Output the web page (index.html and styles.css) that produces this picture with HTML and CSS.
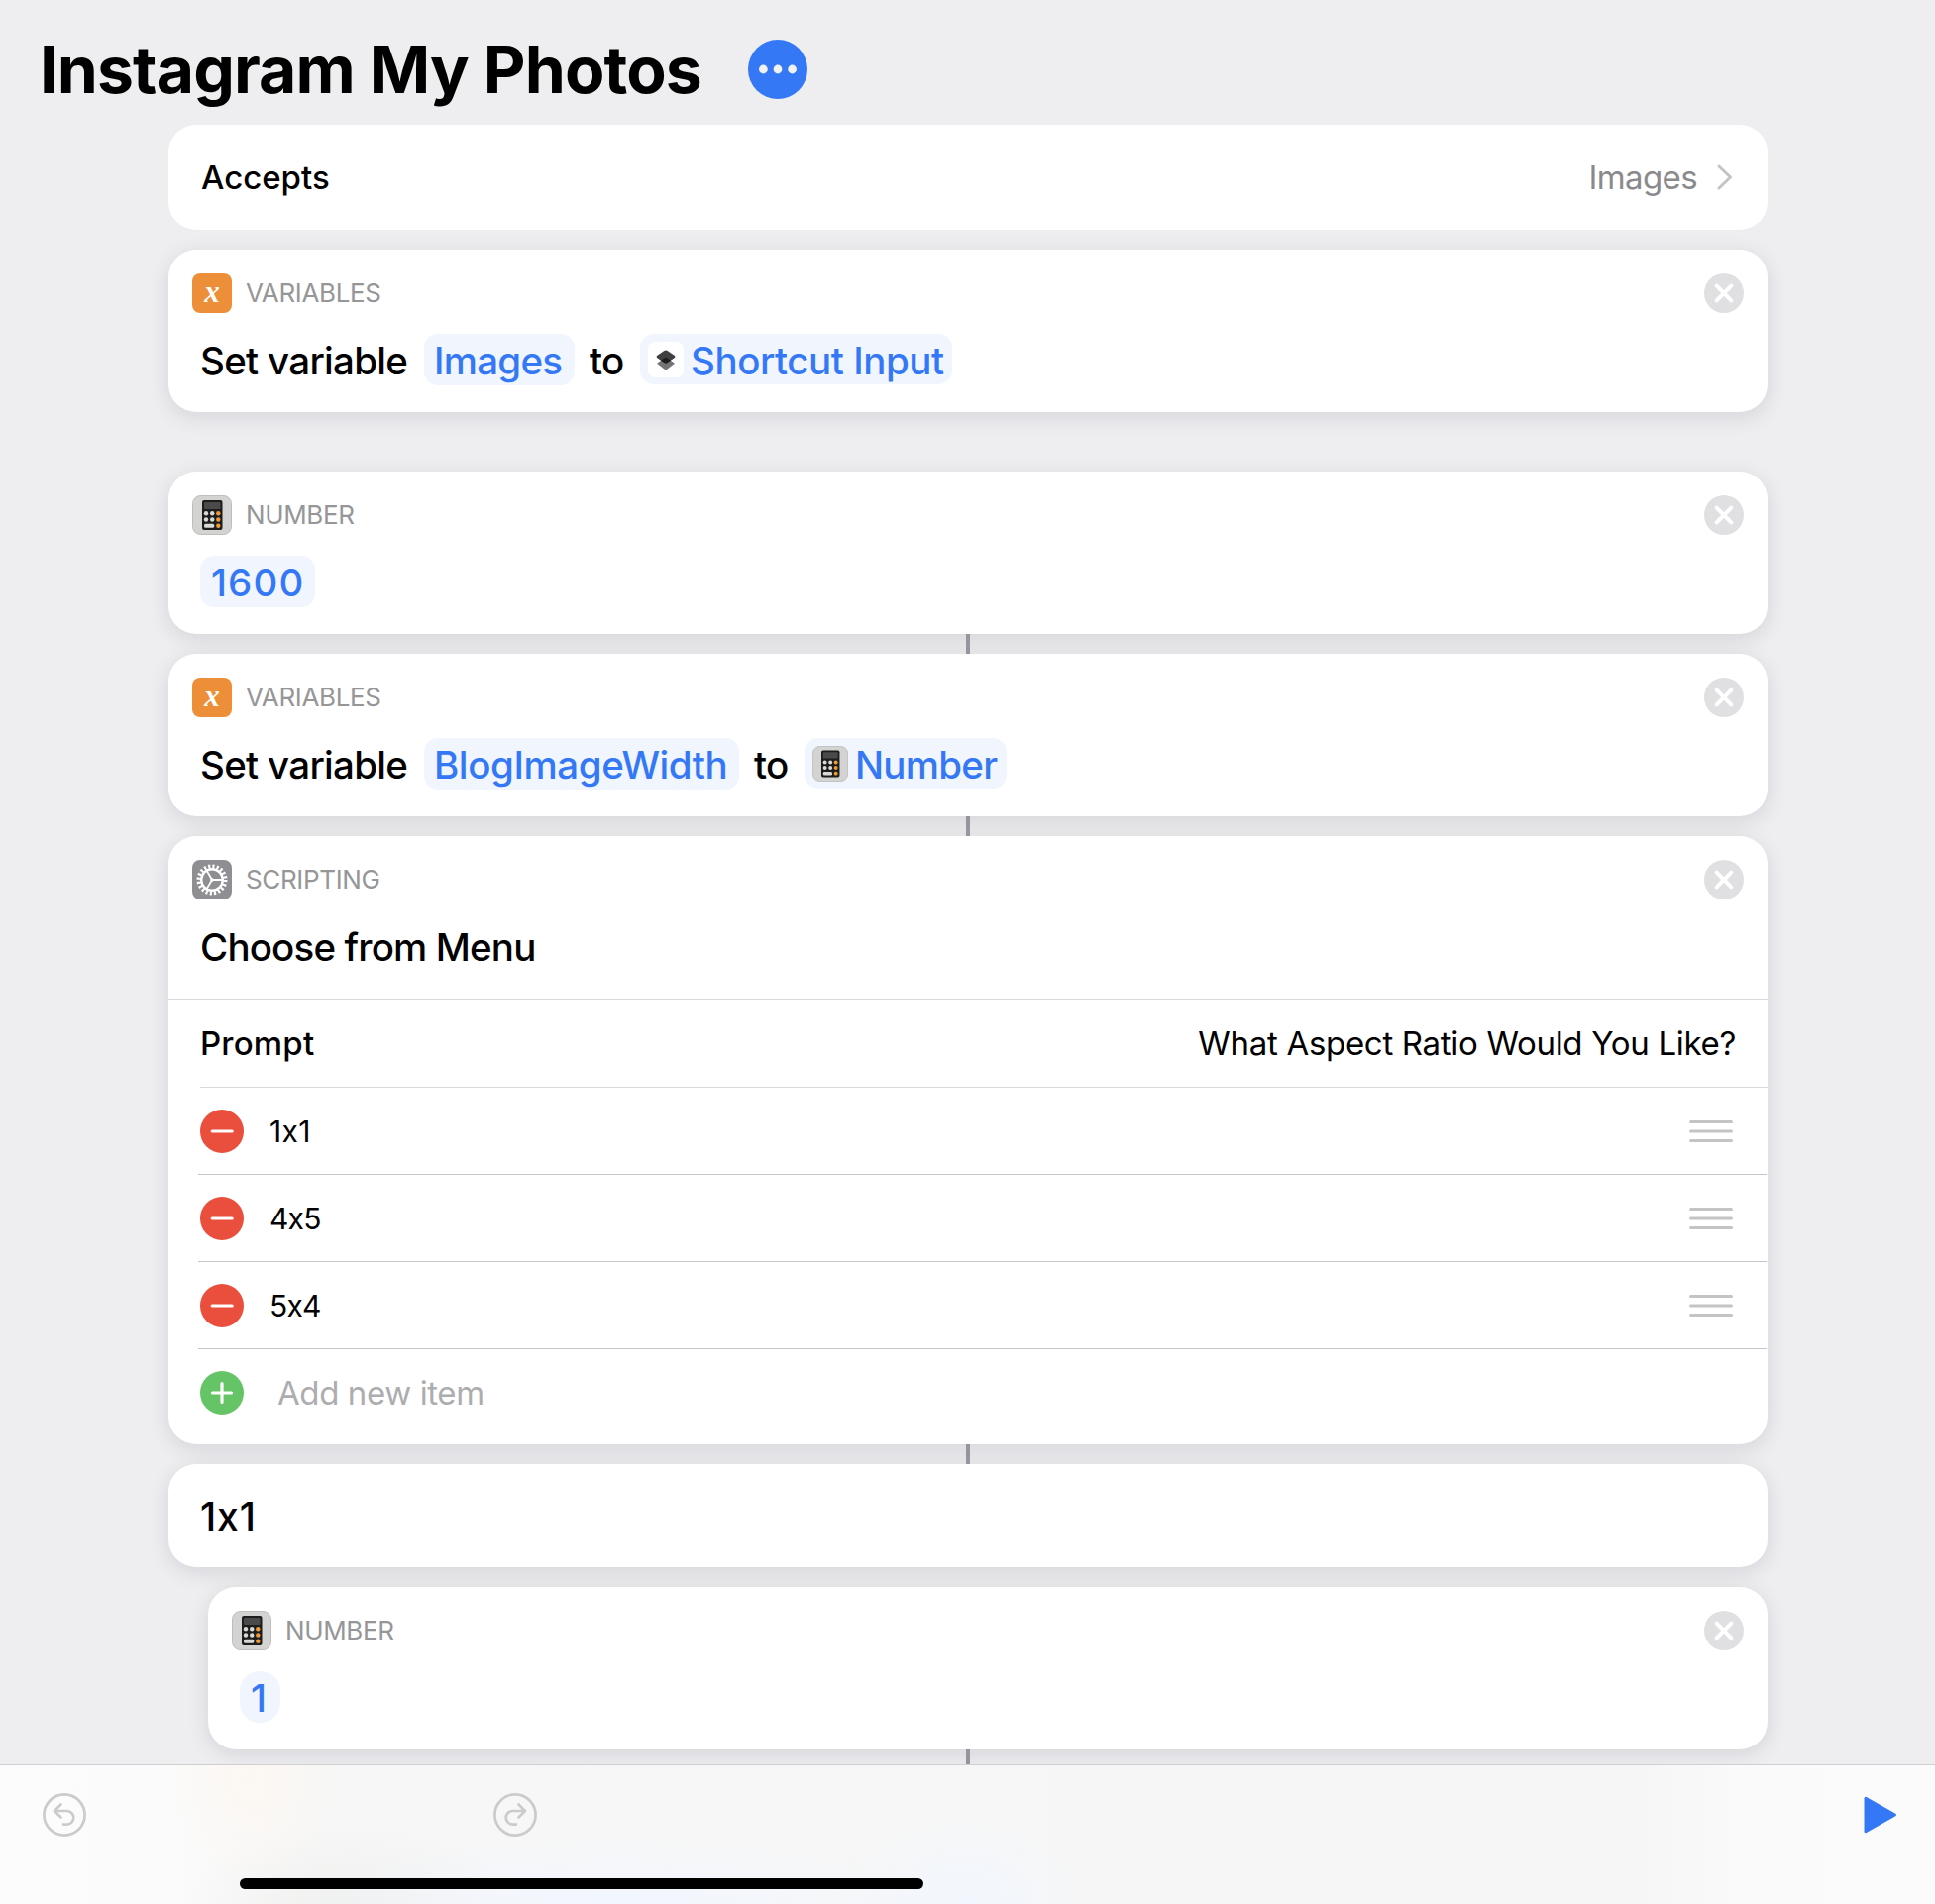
FILE: index.html
```html
<!DOCTYPE html>
<html lang="en">
<head>
<meta charset="utf-8">
<title>Instagram My Photos</title>
<link rel="stylesheet" href="styles.css">
</head>
<body>
<svg class="defs" aria-hidden="true">
  <symbol id="calc" viewBox="0 0 40 40">
    <rect x=".5" y=".5" width="39" height="39" rx="8" fill="#d3d3d1" stroke="#bdbdbb"/>
    <rect x="10" y="5" width="20.500" height="30" rx="2" fill="#1d1d1d"/>
    <rect x="12" y="7" width="16.500" height="7" rx="1" fill="#4a4a4a"/>
    <g fill="#d9d9d7"><circle cx="14" cy="18.300" r="2.200"/><circle cx="20.200" cy="18.300" r="2.200"/><circle cx="14" cy="24.500" r="2.200"/><circle cx="20.200" cy="24.500" r="2.200"/><rect x="12" y="28.800" width="10.200" height="4" rx="1.500"/></g>
    <g fill="#f09a37"><circle cx="26.300" cy="18.300" r="2.200"/><circle cx="26.300" cy="24.500" r="2.200"/><circle cx="26.300" cy="30.700" r="2.200"/></g>
  </symbol>
  <symbol id="close" viewBox="0 0 40 40"><circle cx="20" cy="20" r="20" fill="#e0e0e2"/><path d="M12.700 12.700l14.600 14.600M27.300 12.700l-14.600 14.600" stroke="#fff" stroke-width="4" stroke-linecap="round"/></symbol>
  <symbol id="minus" viewBox="0 0 44 44"><circle cx="22" cy="22" r="22" fill="#ea4e3d"/><path d="M12.200 22h20" stroke="#fff" stroke-width="3.200" stroke-linecap="round"/></symbol>
  <symbol id="grip" viewBox="0 0 44 24"><path d="M1.500 2.500h41M1.500 12h41M1.500 21.500h41" stroke="#c4c4c4" stroke-width="3" stroke-linecap="round"/></symbol>
</svg>
<main class="editor">
  <header class="title-bar">
    <h1>Instagram My Photos</h1>
    <svg class="more" viewBox="0 0 60 60"><circle cx="30" cy="30" r="30" fill="#3478f6"/><g fill="#f2f2f4"><circle cx="15.400" cy="30" r="4.400"/><circle cx="30" cy="30" r="4.400"/><circle cx="44.600" cy="30" r="4.400"/></g></svg>
  </header>
  <section class="flow">
    <div class="card accepts">
      <span>Accepts</span>
      <span class="value">Images</span>
      <svg class="chevron" viewBox="0 0 16 26"><path d="M2 2l11.500 11L2 24" fill="none" stroke="#c4c4c6" stroke-width="3" stroke-linecap="round" stroke-linejoin="round"/></svg>
    </div>

    <article class="card action loose">
      <div class="head"><span class="icon var">x</span><span class="kind">VARIABLES</span><svg class="close"><use href="#close"/></svg></div>
      <div class="sentence"><span class="t-set">Set variable</span><span class="pill p-images">Images</span><span class="t-to">to</span><span class="pill magic p-input"><svg class="glyph" viewBox="0 0 36 36"><rect width="36" height="36" rx="7" fill="#fff"/><path d="M18 15.500l9 6.200-7.400 5.900q-1.600 1-3.200 0L9 21.700z" fill="#747474"/><path d="M16.400 8.900q1.600-1 3.200 0l7.400 5.200q.8.900 0 1.800l-7.400 5.200q-1.600 1-3.200 0L9 15.900q-.8-.9 0-1.800z" fill="#404040"/><path d="M18 15.500l5 3.200-3.400 2.400q-1.600 1-3.200 0L13 18.700z" fill="#1e1e1e"/></svg><span>Shortcut Input</span></span></div>
    </article>

    <article class="card action">
      <div class="head"><svg class="icon"><use href="#calc"/></svg><span class="kind">NUMBER</span><svg class="close"><use href="#close"/></svg></div>
      <div class="sentence"><span class="pill p-1600">1600</span></div>
    </article>
    <i class="link"></i>

    <article class="card action">
      <div class="head"><span class="icon var">x</span><span class="kind">VARIABLES</span><svg class="close"><use href="#close"/></svg></div>
      <div class="sentence"><span class="t-set">Set variable</span><span class="pill p-blog">BlogImageWidth</span><span class="t-to">to</span><span class="pill magic p-number"><svg class="glyph"><use href="#calc"/></svg><span>Number</span></span></div>
    </article>
    <i class="link"></i>

    <article class="card menu">
      <div class="head"><svg class="icon" viewBox="0 0 40 40"><rect width="40" height="40" rx="8" fill="#8e8e93"/><g fill="none" stroke="#fff"><circle cx="20" cy="20" r="13.500" stroke-width="4" stroke-dasharray="2.120 2.121"/><circle cx="20" cy="20" r="10.800" stroke-width="2.400"/><path d="M20 20h10.500M20 20l-5.300-9.100M20 20l-5.300 9.100" stroke-width="1.800"/></g><circle cx="20" cy="20" r="1.800" fill="#fff"/></svg><span class="kind">SCRIPTING</span><svg class="close"><use href="#close"/></svg></div>
      <div class="sentence"><span class="t-choose">Choose from Menu</span></div>
      <div class="prompt"><span class="t-prompt">Prompt</span><span class="question">What Aspect Ratio Would You Like?</span></div>
      <div class="item first"><svg class="dot"><use href="#minus"/></svg><span>1x1</span><svg class="grip"><use href="#grip"/></svg></div>
      <div class="item tight"><svg class="dot"><use href="#minus"/></svg><span>4x5</span><svg class="grip"><use href="#grip"/></svg></div>
      <div class="item tight"><svg class="dot"><use href="#minus"/></svg><span>5x4</span><svg class="grip"><use href="#grip"/></svg></div>
      <div class="item add"><svg class="dot" viewBox="0 0 44 44"><circle cx="22" cy="22" r="22" fill="#65c466"/><path d="M12.500 22h19M22 12.500v19" stroke="#fff" stroke-width="3.200" stroke-linecap="round"/></svg><span>Add new item</span></div>
    </article>
    <i class="link"></i>

    <div class="card case">1x1</div>

    <article class="card action nested">
      <div class="head"><svg class="icon"><use href="#calc"/></svg><span class="kind">NUMBER</span><svg class="close"><use href="#close"/></svg></div>
      <div class="sentence"><span class="pill p-one">1</span></div>
    </article>
    <i class="link nested-link"></i>
  </section>
</main>
<footer class="toolbar">
  <div class="tools">
    <svg class="undo" viewBox="0 0 44 44" fill="none" stroke="#cbcbcb" stroke-width="2.700" stroke-linecap="round" stroke-linejoin="round"><circle cx="22" cy="22" r="20.600"/><path d="M18.500 11.500L12 18l6.500 6.500M12 18h12.500a6.800 6.800 0 0 1 0 13.600H21"/></svg>
    <svg class="redo" viewBox="0 0 44 44" fill="none" stroke="#cbcbcb" stroke-width="2.700" stroke-linecap="round" stroke-linejoin="round"><circle cx="22" cy="22" r="20.600"/><path d="M25.500 11.500L32 18l-6.500 6.500M32 18H19.500a6.800 6.800 0 0 0 0 13.600H23"/></svg>
    <svg class="play" viewBox="0 0 34 38"><path d="M2 2.200L31.500 19 2 35.800z" fill="#3478f6" stroke="#3478f6" stroke-width="3" stroke-linejoin="round"/></svg>
  </div>
  <div class="home"></div>
</footer>
</body>
</html>
```
FILE: styles.css
```css
* { box-sizing: border-box; }
body {
  margin: 0;
  width: 1953px;
  height: 1922px;
  overflow: hidden;
  display: flex;
  flex-direction: column;
  background: #eeeef1;
  color: #000;
  font-family: Inter, "Liberation Sans", sans-serif;
  font-feature-settings: "calt" 0;
  white-space: nowrap;
}
svg { display: block; flex: none; }
.defs { position: absolute; width: 0; height: 0; }
.editor { height: 1781px; overflow: hidden; flex: none; }

.title-bar { display: flex; align-items: center; height: 126px; padding: 14px 0 0 40px; }
h1 { margin: 0; width: 715px; font-size: 66px; font-weight: 700; line-height: 80px; letter-spacing: -.85px; }
.more { width: 60px; height: 60px; }

.flow { display: flex; flex-direction: column; margin: 0 169px 0 170px; }
.card { flex: none; background: #fff; border-radius: 28px; box-shadow: 0 5px 22px rgba(0, 0, 25, .11); }
.accepts {
  display: flex;
  align-items: center;
  height: 106px;
  margin-bottom: 20px;
  padding: 0 35px 0 33px;
  font-size: 33px;
  font-weight: 500;
  box-shadow: none;
}
.accepts .value { margin-left: auto; font-weight: 400; letter-spacing: -.6px; color: #8a8a8c; }
.chevron { width: 16px; height: 26px; margin-left: 20px; }

.action { height: 164px; }
.loose { margin-bottom: 60px; }
.nested { margin-left: 40px; }
.link { flex: none; align-self: center; width: 4px; height: 20px; background: #93969c; position: relative; }

.head { display: flex; align-items: center; height: 64px; padding: 24px 24px 0; }
.icon { width: 40px; height: 40px; }
.var {
  border-radius: 8px;
  background: #ec8f38;
  color: #fff;
  font: italic 700 31px/38px "Liberation Serif", serif;
  text-align: center;
}
.kind { margin-left: 14px; font-size: 26px; line-height: 40px; letter-spacing: -.35px; color: #969698; }
.close { width: 40px; height: 40px; margin-left: auto; }

.sentence {
  display: flex;
  align-items: center;
  height: 52px;
  margin-top: 21px;
  padding-left: 32px;
  font-size: 38.5px;
  font-weight: 500;
  line-height: 50px;
}
.sentence span:not(.pill), .pill:not(.magic) { padding-top: 2px; }
.pill { display: flex; align-items: center; height: 52px; border-radius: 14px; background: #f0f5fe; color: #3478f6; padding-left: 10px; }
.magic { height: 51px; padding-left: 8px; margin-bottom: 1px; }
.glyph { width: 36px; height: 36px; margin-right: 7px; }
.t-set { width: 226px; letter-spacing: -.7px; }
.t-to { width: 66px; padding-left: 15px; letter-spacing: -.7px; }
.t-choose { letter-spacing: -.85px; }
.p-images { width: 152px; letter-spacing: -.75px; }
.p-input { width: 315px; letter-spacing: -.45px; }
.p-1600 { width: 116px; padding-left: 11px; letter-spacing: 1.1px; }
.p-blog { width: 318px; letter-spacing: -.42px; }
.p-number { width: 204px; letter-spacing: -.75px; }
.p-one { width: 41px; padding-left: 11px; border-radius: 20px; }

.menu { height: 614px; }
.prompt {
  display: flex;
  align-items: center;
  justify-content: space-between;
  height: 89px;
  margin-top: 27px;
  padding: 0 32px;
  border-top: 1px solid #d9d9db;
  font-size: 33px;
  font-weight: 500;
}
.t-prompt { letter-spacing: .2px; }
.question { font-weight: 400; letter-spacing: -.31px; }
.item {
  display: flex;
  align-items: center;
  height: 88px;
  margin: 0 1px 0 30px;
  padding: 0 34px 0 2px;
  border-top: 1px solid #c6c6c8;
  font-size: 30px;
}
.item.first { margin: 0 0 0 32px; padding: 0 35px 0 0; border-color: #d9d9db; letter-spacing: .3px; }
.item.tight { letter-spacing: -.8px; }
.dot { width: 44px; height: 44px; margin-right: 26px; }
.grip { width: 44px; height: 24px; margin-left: auto; }
.item.add { font-size: 33px; letter-spacing: -.4px; color: #adadaf; }
.add .dot { margin-right: 34px; }

.case { display: flex; align-items: center; height: 104px; margin-bottom: 20px; padding-left: 32px; font-size: 39px; font-weight: 500; letter-spacing: .9px; }

.toolbar {
  flex: none;
  height: 141px;
  border-top: 1px solid #cfcfd1;
  background:
    radial-gradient(ellipse 90px 110px at 255px 10px, rgba(255, 246, 236, .55), transparent),
    radial-gradient(ellipse 330px 70px at 620px 140px, rgba(241, 246, 255, .9), transparent),
    radial-gradient(ellipse 130px 90px at 970px 140px, rgba(241, 247, 254, .9), transparent),
    radial-gradient(ellipse 170px 80px at 350px 140px, rgba(239, 239, 238, .9), transparent),
    linear-gradient(90deg, #fcfcfc 0, #fbfbfb 170px, #f7f7f7 330px, #f6f6f6 1650px, #fafafa 1760px, #fbfbfb 100%);
}
.tools { display: flex; align-items: center; height: 100px; padding: 0 38px 0 43px; }
.undo, .redo { width: 44px; height: 44px; }
.redo { margin-left: 411px; }
.play { width: 34px; height: 38px; margin-left: auto; }
.home { width: 690px; height: 11px; margin: 14px 0 0 242px; border-radius: 6px; background: #000; }
```
